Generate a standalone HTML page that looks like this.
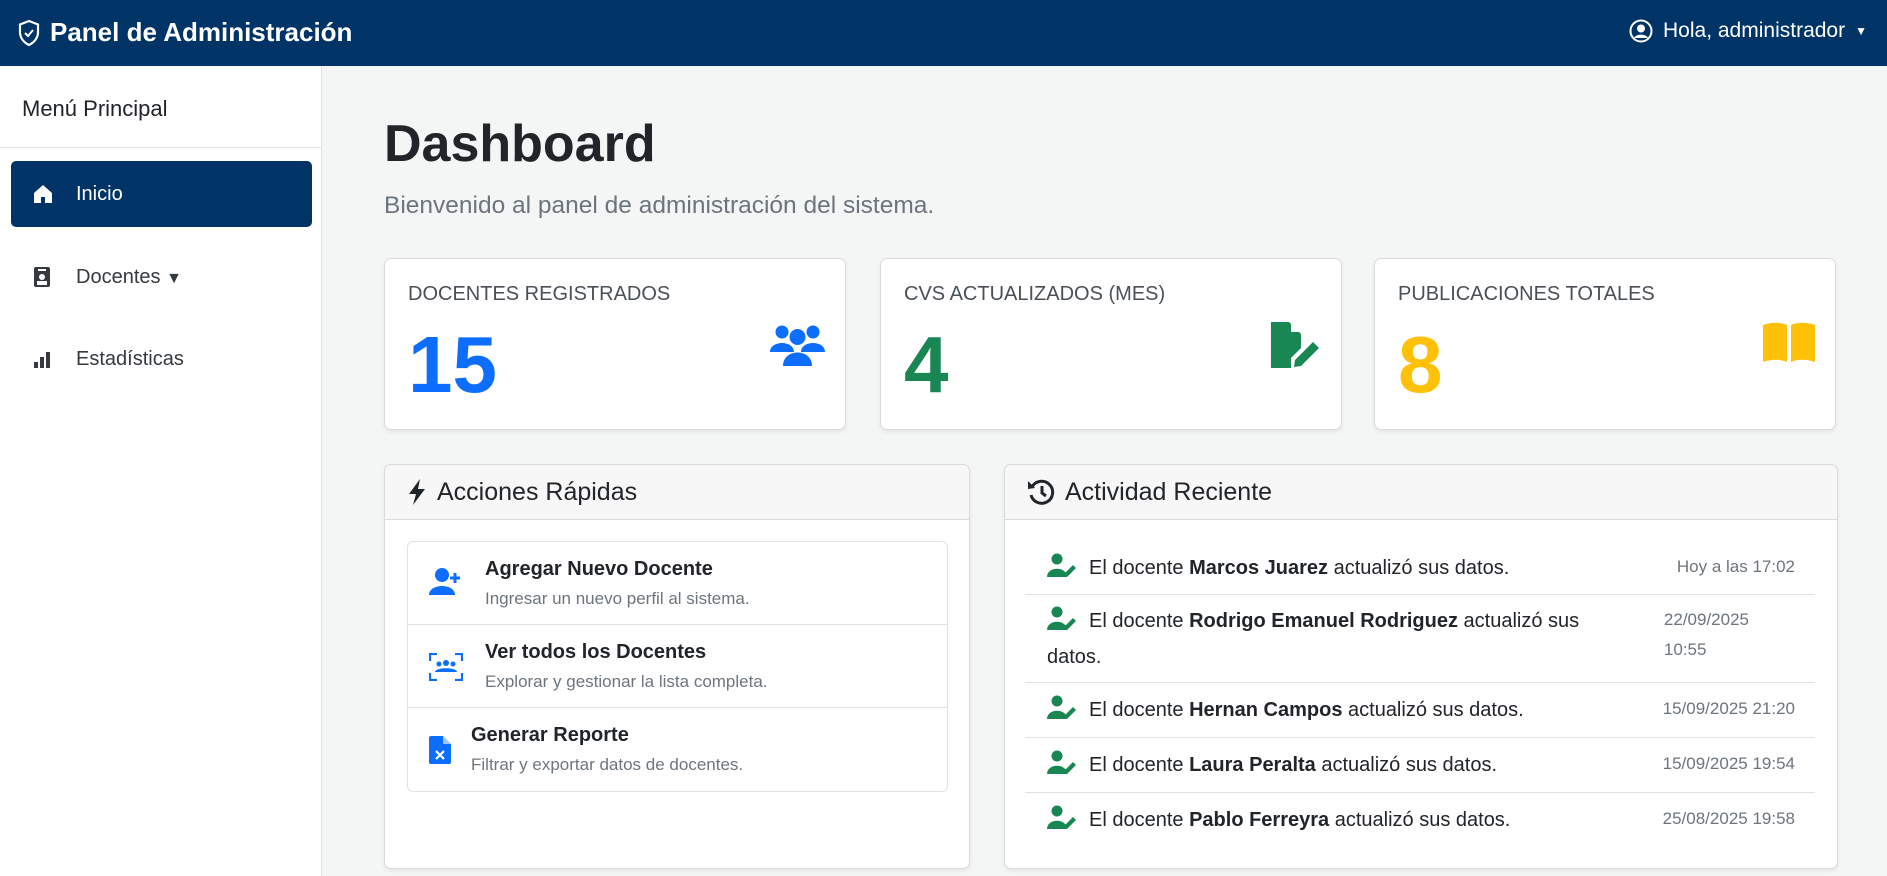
<!DOCTYPE html>
<html><head><meta charset="utf-8"><style>
*{box-sizing:border-box;margin:0;padding:0}
body{width:1887px;height:876px;overflow:hidden;background:#f4f5f5;font-family:"Liberation Sans",sans-serif;color:#212529;position:relative}
.top{position:absolute;left:0;top:0;width:1887px;height:66px;background:#003366;color:#fff}
.brand{position:absolute;left:17px;top:17px;font-size:26px;font-weight:bold;display:flex;align-items:center;gap:9px}
.user{position:absolute;right:20px;top:19px;font-size:21px;display:flex;align-items:center;gap:10px}
.side{position:absolute;left:0;top:66px;width:322px;height:810px;background:#fff;border-right:1px solid #dee2e6}
.side h3{font-size:22px;font-weight:normal;position:absolute;left:22px;top:30px}
.side .sep{position:absolute;left:0;top:81px;width:321px;border-top:1px solid #e3e3e3}
.nav{position:absolute;left:11px;width:301px;height:66px;border-radius:5px;display:flex;align-items:center;font-size:20px;color:#343a40}
.nav svg{position:absolute;left:22px}
.nav .lb{position:absolute;left:65px}
.nav.act{background:#003366;color:#fff}
.h1{position:absolute;left:384px;top:114px;font-size:52px;font-weight:bold}
.sub{position:absolute;left:384px;top:192px;font-size:24.5px;color:#6c757d;font-weight:300}
.card{position:absolute;background:#fff;border:1px solid #d8dadc;border-radius:7px;box-shadow:0 2px 4px rgba(0,0,0,.06)}
.stat h5{position:absolute;left:23px;top:24px;font-size:20px;font-weight:normal;color:#495057}
.stat .n{position:absolute;left:23px;top:66px;font-size:80px;font-weight:bold;line-height:1}
.stat svg{position:absolute;right:20px;top:63px}
.ch{height:55px;background:#f7f7f7;border-bottom:1px solid #d8dadc;border-radius:7px 7px 0 0;display:flex;align-items:center;padding-left:22px;font-size:25px;gap:10px}
.lg{position:absolute;left:22px;top:76px;width:541px;height:251px;border:1px solid #dee2e6;border-radius:6px}
.li{height:83px;border-bottom:1px solid #dee2e6;position:relative}
.li:last-child{border-bottom:none}
.li b{position:absolute;font-size:20px;top:16px}
.li small{position:absolute;font-size:17px;color:#6c757d;top:47px}
.li svg{position:absolute}
.ar{position:absolute;left:20px;width:790px;border-bottom:1px solid #dee2e6;font-size:20px}
.ar .tx{position:absolute;left:22px;line-height:38px}
.ar .tm{position:absolute;right:20px;font-size:17px;color:#6c757d;text-align:left;line-height:30px}
.ic{display:inline-block;vertical-align:-3px;margin:0 12px 0 0}
</style></head><body>
<div class="top">
 <div class="brand"><svg width="24" height="28" viewBox="0 0 24 28"><path d="M12 2 L21 5.5 V13 C21 19 17 23.5 12 26 C7 23.5 3 19 3 13 V5.5 Z" fill="none" stroke="#fff" stroke-width="2.2"/><path d="M8 14 l3 3 l5 -6" fill="none" stroke="#fff" stroke-width="2"/></svg>Panel de Administración</div>
 <div class="user"><svg width="24" height="24" viewBox="0 0 24 24"><circle cx="12" cy="12" r="10.5" fill="none" stroke="#fff" stroke-width="2"/><circle cx="12" cy="9.5" r="4" fill="#fff"/><path d="M5 19 C7 14.5 17 14.5 19 19" fill="#fff"/></svg>Hola, administrador <span style="font-size:12px">▼</span></div>
</div>
<div class="side">
 <h3>Menú Principal</h3><div class="sep"></div>
 <div class="nav act" style="top:95px"><svg width="20" height="20" viewBox="0 0 20 20"><path d="M10 1 L19 9 V19 H12 V13 H8 V19 H1 V9 Z" fill="#fff"/></svg><span class="lb">Inicio</span></div>
 <div class="nav" style="top:178px"><svg width="18" height="22" viewBox="0 0 18 22"><rect x="1" y="1" width="16" height="20" rx="2" fill="#343a40"/><rect x="5" y="3" width="8" height="2" fill="#fff"/><circle cx="9" cy="11" r="3" fill="#fff"/><rect x="4" y="15" width="10" height="4" fill="#fff"/></svg><span class="lb">Docentes <span style="font-size:16px">▼</span></span></div>
 <div class="nav" style="top:260px"><svg width="20" height="20" viewBox="0 0 20 20"><rect x="1" y="13" width="4" height="6" fill="#343a40"/><rect x="7" y="8" width="4" height="11" fill="#343a40"/><rect x="13" y="3" width="4" height="16" fill="#343a40"/></svg><span class="lb">Estadísticas</span></div>
</div>
<div class="h1">Dashboard</div>
<div class="sub">Bienvenido al panel de administración del sistema.</div>

<div class="card stat" style="left:384px;top:258px;width:462px;height:172px"><h5>DOCENTES REGISTRADOS</h5><div class="n" style="color:#0d6efd">15</div>
<svg width="55" height="45" viewBox="0 0 55 45"><circle cx="12" cy="10" r="6.5" fill="#0d6efd"/><circle cx="43" cy="10" r="6.5" fill="#0d6efd"/><circle cx="27.5" cy="15" r="8" fill="#0d6efd"/><path d="M0 30 C0 18 24 18 24 30 Z M31 30 C31 18 55 18 55 30 Z" fill="#0d6efd"/><path d="M13 44 C13 26 42 26 42 44 Z" fill="#0d6efd"/></svg></div>
<div class="card stat" style="left:880px;top:258px;width:462px;height:172px"><h5>CVS ACTUALIZADOS (MES)</h5><div class="n" style="color:#198754">4</div>
<svg width="52" height="46" viewBox="0 0 52 46"><path d="M2 0 H20 L32 12 V26 L22 36 V46 H2 Z" fill="#198754"/><path d="M22 0 V10 H32 Z" fill="#fff"/><path d="M26 38 L44 20 L50 26 L32 44 L25 45 Z" fill="#198754"/></svg></div>
<div class="card stat" style="left:1374px;top:258px;width:462px;height:172px"><h5>PUBLICACIONES TOTALES</h5><div class="n" style="color:#ffc107">8</div>
<svg width="52" height="40" viewBox="0 0 52 40"><path d="M0 3 C8 0 18 0 24 3 V40 C18 37 8 37 0 40 Z M28 3 C34 0 44 0 52 3 V40 C44 37 34 37 28 40 Z" fill="#ffc107"/></svg></div>

<div class="card" style="left:384px;top:464px;width:586px;height:405px">
 <div class="ch"><svg width="20" height="26" viewBox="0 0 20 26"><path d="M13 0 L2 15 H9 L6 26 L18 10 H11 Z" fill="#212529"/></svg>Acciones Rápidas</div>
 <div class="lg">
  <div class="li"><svg style="left:21px;top:25px" width="34" height="28" viewBox="0 0 34 28"><circle cx="13" cy="8" r="7" fill="#0d6efd"/><path d="M0 28 C0 16 26 16 26 28 Z" fill="#0d6efd"/><path d="M26 6 V16 M21 11 H31" stroke="#0d6efd" stroke-width="3"/></svg><b style="left:77px">Agregar Nuevo Docente</b><small style="left:77px">Ingresar un nuevo perfil al sistema.</small></div>
  <div class="li"><svg style="left:21px;top:28px" width="34" height="28" viewBox="0 0 34 28"><path d="M1 8 V1 H8 M26 1 H33 V8 M33 20 V27 H26 M8 27 H1 V20" fill="none" stroke="#0d6efd" stroke-width="2.2"/><circle cx="10" cy="11" r="2.5" fill="#0d6efd"/><circle cx="17" cy="10" r="3" fill="#0d6efd"/><circle cx="24" cy="11" r="2.5" fill="#0d6efd"/><path d="M6 19 C6 14 28 14 28 19 Z" fill="#0d6efd"/></svg><b style="left:77px">Ver todos los Docentes</b><small style="left:77px">Explorar y gestionar la lista completa.</small></div>
  <div class="li"><svg style="left:21px;top:28px" width="22" height="28" viewBox="0 0 22 28"><path d="M2 0 H14 L22 8 V26 Q22 28 20 28 H2 Q0 28 0 26 V2 Q0 0 2 0 Z" fill="#0d6efd"/><path d="M14 0 V8 H22" fill="#fff" opacity=".6"/><path d="M7 15 L15 23 M15 15 L7 23" stroke="#fff" stroke-width="2.2"/></svg><b style="left:63px">Generar Reporte</b><small style="left:63px">Filtrar y exportar datos de docentes.</small></div>
 </div>
</div>

<div class="card" style="left:1004px;top:464px;width:834px;height:405px">
 <div class="ch"><svg width="28" height="28" viewBox="0 0 28 28"><path d="M5 9 A11 11 0 1 1 4 17" fill="none" stroke="#212529" stroke-width="3"/><path d="M1 3 L8 10 L1 11 Z" fill="#212529"/><path d="M15 8 V15 L19 18" fill="none" stroke="#212529" stroke-width="3"/></svg>Actividad Reciente</div>
 <div class="ar" style="top:76px;height:54px"><div class="tx" style="top:8px"><span class="ic"><svg width="30" height="24" viewBox="0 0 30 24"><circle cx="10" cy="6" r="5.5" fill="#198754"/><path d="M0 24 C0 13 20 13 20 24 Z" fill="#198754"/><path d="M16 22 L26 12 L29 15 L19 25 Z" fill="#198754"/></svg></span>El docente <b>Marcos Juarez</b> actualizó sus datos.</div><div class="tm" style="top:11px">Hoy a las 17:02</div></div>
 <div class="ar" style="top:130px;height:88px"><div class="tx" style="top:10px;width:555px;line-height:33px"><span class="ic"><svg width="30" height="24" viewBox="0 0 30 24"><circle cx="10" cy="6" r="5.5" fill="#198754"/><path d="M0 24 C0 13 20 13 20 24 Z" fill="#198754"/><path d="M16 22 L26 12 L29 15 L19 25 Z" fill="#198754"/></svg></span>El docente <b>Rodrigo Emanuel Rodriguez</b> actualizó sus datos.</div><div class="tm" style="top:10px;right:66px">22/09/2025<br>10:55</div></div>
 <div class="ar" style="top:218px;height:55px"><div class="tx" style="top:8px"><span class="ic"><svg width="30" height="24" viewBox="0 0 30 24"><circle cx="10" cy="6" r="5.5" fill="#198754"/><path d="M0 24 C0 13 20 13 20 24 Z" fill="#198754"/><path d="M16 22 L26 12 L29 15 L19 25 Z" fill="#198754"/></svg></span>El docente <b>Hernan Campos</b> actualizó sus datos.</div><div class="tm" style="top:11px">15/09/2025 21:20</div></div>
 <div class="ar" style="top:273px;height:55px"><div class="tx" style="top:8px"><span class="ic"><svg width="30" height="24" viewBox="0 0 30 24"><circle cx="10" cy="6" r="5.5" fill="#198754"/><path d="M0 24 C0 13 20 13 20 24 Z" fill="#198754"/><path d="M16 22 L26 12 L29 15 L19 25 Z" fill="#198754"/></svg></span>El docente <b>Laura Peralta</b> actualizó sus datos.</div><div class="tm" style="top:11px">15/09/2025 19:54</div></div>
 <div class="ar" style="top:328px;height:55px;border-bottom:none"><div class="tx" style="top:8px"><span class="ic"><svg width="30" height="24" viewBox="0 0 30 24"><circle cx="10" cy="6" r="5.5" fill="#198754"/><path d="M0 24 C0 13 20 13 20 24 Z" fill="#198754"/><path d="M16 22 L26 12 L29 15 L19 25 Z" fill="#198754"/></svg></span>El docente <b>Pablo Ferreyra</b> actualizó sus datos.</div><div class="tm" style="top:11px">25/08/2025 19:58</div></div>
</div>
</body></html>
